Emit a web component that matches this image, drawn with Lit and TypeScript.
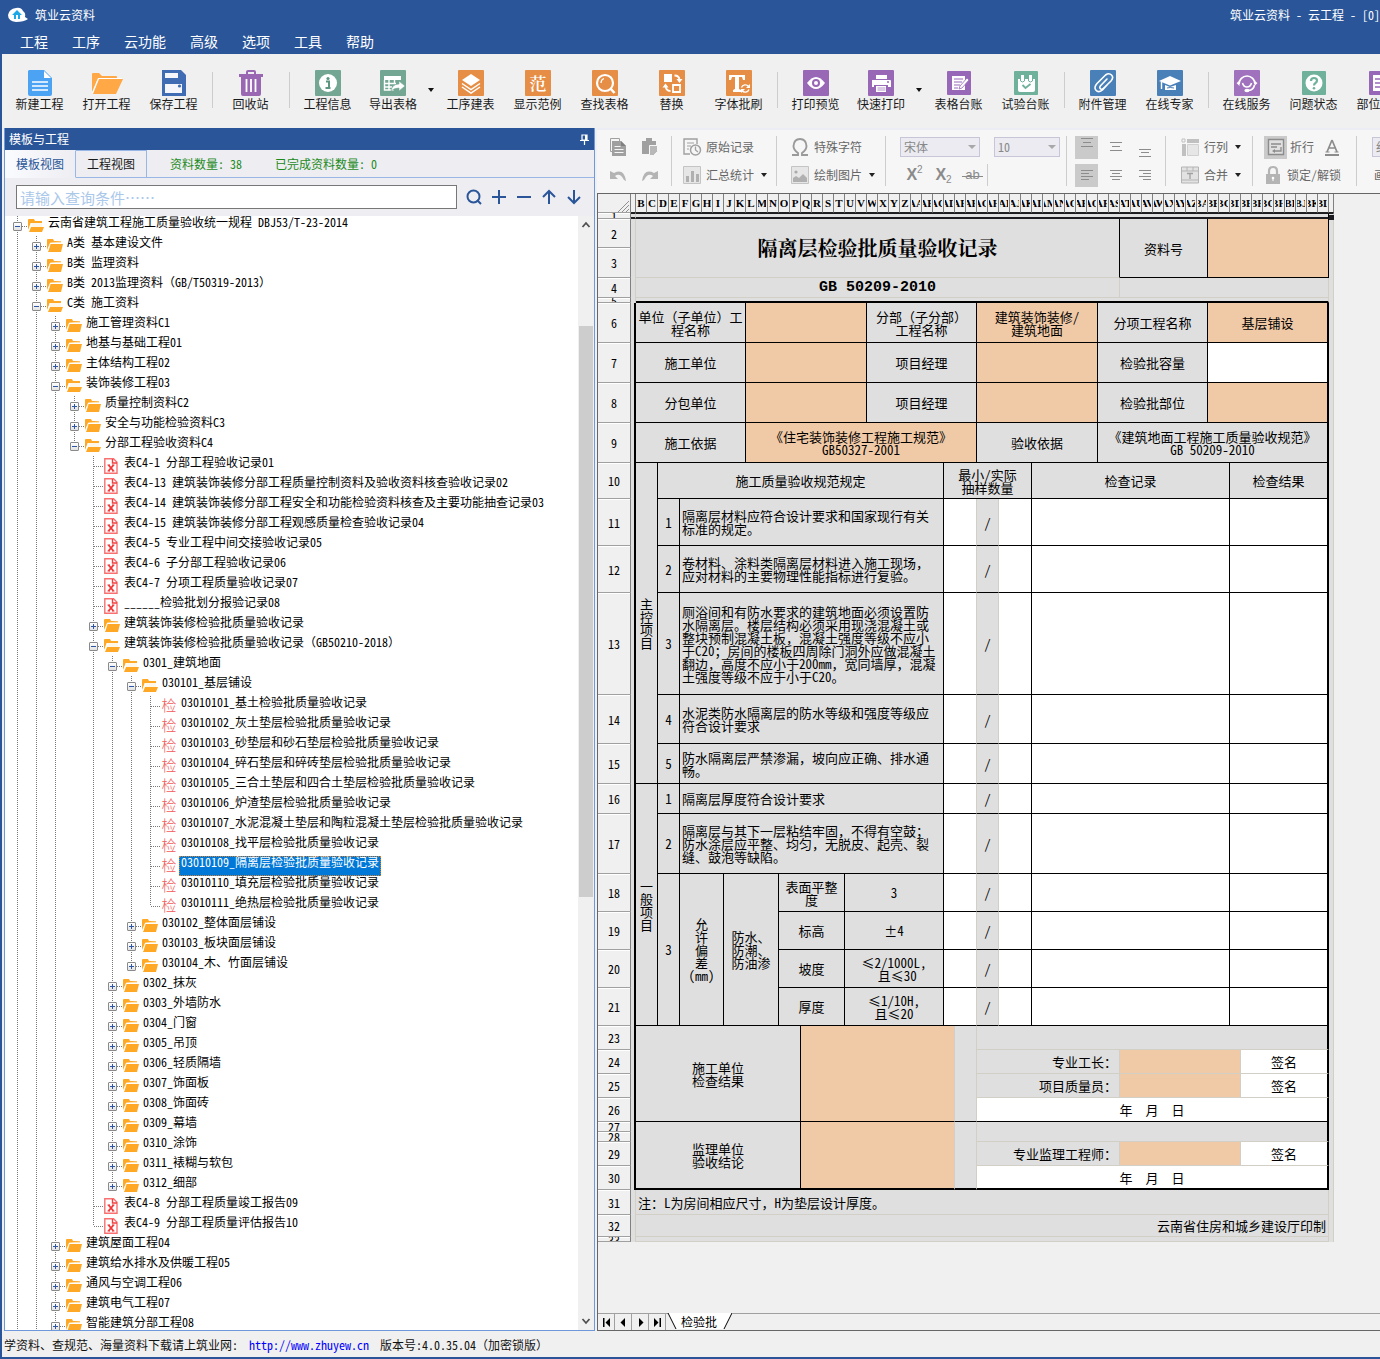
import { LitElement, html, css, svg, nothing } from "lit";
import { customElement, property } from "lit/decorators.js";
import { classMap } from "lit/directives/class-map.js";

const FONT = css`"Noto Sans Mono CJK SC", "Liberation Serif", "Noto Sans CJK SC", sans-serif`;

/* ---------- main toolbar icons, 26 x 26 ---------- */
const tile = (color: string, body: unknown) => svg`<rect width="26" height="26" rx="1" fill=${color}/>${body}`;
const smallTile = (color: string, body: unknown) => svg`<rect x="1" y="1" width="24" height="24" rx="1" fill=${color}/>${body}`;

const icons: Record<string, unknown> = {
  create: svg`<path d="M2 0h15l8 8v16a2 2 0 0 1-2 2H3a2 2 0 0 1-2-2V1z" fill="#4da3f3"/><path d="M17 1v7h7z" fill="#fff"/><path d="M5 12h16M5 16h16M5 20h16" stroke="#fff" stroke-width="1.6"/>`,
  open: svg`<path d="M-2 22V4q0-1 1-1h6l3 3h14q1 0 1 1v1H4z" fill="#ffa845"/><path d="M5 9h24l-7 15H-1z" fill="#ffa845"/><path d="M-1.500 23L4.500 8.500H28" stroke="#fff" stroke-width="1" fill="none"/>`,
  save: svg`<path d="M1 0h19l5 5v21H1z" fill="#3f6cb3"/><path d="M4 3h13v5H4zM4 14h17v9H4z" fill="#f4f6fb"/><circle cx="18.500" cy="16" r="1.600" fill="#3f6cb3"/>`,
  trash: svg`<path d="M9 5V2q0-1 1-1h6q1 0 1 1v3" fill="none" stroke="#9a68b2" stroke-width="2"/><path d="M1 4h24v3H1zM3 7h20v17q0 2-2 2H5q-2 0-2-2z" fill="#9a68b2"/><path d="M8.500 9v13M13 9v13M17.500 9v13" stroke="#fff" stroke-width="1.800"/>`,
  info: tile("#74a793", svg`<circle cx="13" cy="13" r="9" fill="#fff"/><circle cx="13" cy="8.500" r="1.600" fill="#5c9680"/><path d="M11 11.500h3v6M10.500 18h5" stroke="#5c9680" stroke-width="2" fill="none"/>`),
  exportTable: tile("#74a793", svg`<path d="M4 6h17v4H4z" fill="#fff"/><path d="M4.500 10v10h9M4 13.500h12M4 17h8M9 10v10M14.500 10v4" stroke="#fff" stroke-width="1.400" fill="none"/><path d="M11 21q1-7 8-7v-3l6 5-6 5v-3q-5 0-8 3z" fill="#fff" stroke="#74a793" stroke-width=".6"/>`),
  layers: tile("#e68e45", svg`<path d="M13 4l9 6-9 6-9-6z" fill="#fff"/><path d="M4 13.500l9 6 9-6M4 17l9 6 9-6" stroke="#fff" stroke-width="1.500" fill="none"/>`),
  sample: tile("#e68e45", svg`<text x="13" y="19.500" text-anchor="middle" font-size="17" fill="#fff" class="glyph">范</text>`),
  find: tile("#e68e45", svg`<circle cx="13" cy="13" r="8" stroke="#fff" stroke-width="2.200" fill="none"/><path d="M18.500 18.500l4 4.500" stroke="#fff" stroke-width="2.600"/><path d="M9 13q0-3.500 3-4.500" stroke="#fff" fill="none" stroke-width="1.200"/>`),
  swap: tile("#e68e45", svg`<path d="M5 4h8v8H5z" fill="#fff"/><path d="M14 15h7v7h-7z" fill="none" stroke="#fff" stroke-width="1.800"/><path d="M15.500 5.500q5 0 5 5M6.500 15q0 6 5 6" stroke="#fff" stroke-width="1.800" fill="none"/><path d="M17.500 9h6l-3 4zM3.500 17.500l3-4 3 4z" fill="#fff"/>`),
  fontBrush: tile("#e68e45", svg`<path d="M3 5h16v5h-2l-1-3h-3v12l2 1v2H7v-2l2-1V7H6l-1 3H3z" fill="#fff"/><path d="M15.500 17.500a4 4 0 0 1 7-1M23 19.500a4 4 0 0 1-7 1" stroke="#fff" stroke-width="1.400" fill="none"/><path d="M24 14v4h-4zM15 23v-4h4z" fill="#fff"/>`),
  preview: tile("#9867b5", svg`<path d="M4 13q9-12 18 0-9 12-18 0z" fill="#fff"/><circle cx="13" cy="13" r="4" fill="#9867b5"/><circle cx="13" cy="13" r="2" fill="#fff"/>`),
  print: tile("#9867b5", svg`<path d="M8 5h11v4H8z" fill="#fff"/><path d="M4 10h18q1 0 1 1v6h-3v-2H6v2H4z" fill="#fff"/><path d="M8 16h10v6H8z" fill="#fff"/><path d="M9.500 18h8M9.500 20h8" stroke="#b796cc" stroke-width="1"/><circle cx="20" cy="12" r="1" fill="#9867b5"/>`),
  ledger: smallTile("#9868b8", svg`<path d="M6 6h13v14H6z" fill="#fff"/><path d="M8 9h9M8 12h8M8 15h6M8 18h4" stroke="#9868b8" stroke-width="1.200"/><path d="M21 8l2 2-7 8-3 1 1-3z" fill="#fff" stroke="#9868b8" stroke-width=".8"/>`),
  testLedger: smallTile("#6fb19b", svg`<path d="M5 9h17v11q0 2-2 2H7q-2 0-2-2z" fill="#fff"/><path d="M9.500 5v6M17.500 5v6" stroke="#fff" stroke-width="3"/><path d="M7.500 9v2q2 2 4 0V9M15.500 9v2q2 2 4 0V9" stroke="#6fb19b" fill="none"/><path d="M9.500 15l3 3 5-4" stroke="#6fb19b" stroke-width="1.800" fill="none"/>`),
  clip: tile("#4a80b8", svg`<path d="M17 9l-6.500 6.800q-1.500 2 0 3t3-.500L21 11q3-3.500.500-6t-6 0L7 13.500q-3.500 4-1 6.800t6.500-.5l5-5.300" stroke="#fff" stroke-width="1.600" fill="none" stroke-linecap="round"/>`),
  expert: tile("#4a80b8", svg`<path d="M13 6l11 5-11 4.500L2 11z" fill="#fff"/><path d="M8 15v5h11v-5l-6 2z" fill="#fff"/><path d="M10 18q3-1 7 0" stroke="#4a80b8" fill="none"/><path d="M4.500 12v7" stroke="#fff" stroke-width="1.400"/>`),
  service: tile("#a071bd", svg`<path d="M5 14a8 8 0 1 1 16 0" stroke="#fff" stroke-width="1.700" fill="none"/><path d="M2.500 13l3-2v5zM23.500 13l-3-2v5z" fill="#fff"/><path d="M8.500 13q1 4 4.500 4t4.500-4" stroke="#fff" stroke-width="1.600" fill="none"/><path d="M20.500 15q-1 5-6 5.500" stroke="#fff" stroke-width="1.600" fill="none"/><ellipse cx="13" cy="20.500" rx="2.600" ry="1.800" fill="#fff"/>`),
  question: smallTile("#6fb19b", svg`<circle cx="13" cy="13" r="8.500" fill="#fff"/><path d="M10 11q0-3 3-3t3 2.600q0 1.600-1.500 2.400T13 15.500" stroke="#6fb19b" stroke-width="2.200" fill="none"/><circle cx="13" cy="18.200" r="1.300" fill="#6fb19b"/>`),
  part: smallTile("#9868b8", svg`<path d="M5 5h14v16H5z" fill="#fff"/><path d="M7 9h10M7 13h10M7 17h10" stroke="#9868b8" stroke-width="1.600"/>`),
};

type Tool = { icon?: string; label?: string; split?: boolean; sep?: boolean };
const tools: Tool[] = [
  { icon: "create", label: "新建工程" }, { icon: "open", label: "打开工程" }, { icon: "save", label: "保存工程" }, { sep: true },
  { icon: "trash", label: "回收站" }, { sep: true },
  { icon: "info", label: "工程信息" }, { icon: "exportTable", label: "导出表格", split: true },
  { icon: "layers", label: "工序建表" }, { icon: "sample", label: "显示范例" }, { icon: "find", label: "查找表格" },
  { icon: "swap", label: "替换" }, { icon: "fontBrush", label: "字体批刷" }, { sep: true },
  { icon: "preview", label: "打印预览" }, { icon: "print", label: "快速打印", split: true },
  { icon: "ledger", label: "表格台账" }, { icon: "testLedger", label: "试验台账" }, { sep: true },
  { icon: "clip", label: "附件管理" }, { icon: "expert", label: "在线专家" }, { sep: true },
  { icon: "service", label: "在线服务" }, { icon: "question", label: "问题状态" }, { icon: "part", label: "部位管理" },
];

/* ---------- tree ---------- */
type Kind = "+" | "-" | "x" | "j";
type Node = [level: number, kind: Kind, text: string];
const nodes: Node[] = [
  [0, "-", "云南省建筑工程施工质量验收统一规程 DBJ53/T-23-2014"],
  [1, "+", "A类 基本建设文件"],
  [1, "+", "B类 监理资料"],
  [1, "+", "B类 2013监理资料（GB/T50319-2013）"],
  [1, "-", "C类 施工资料"],
  [2, "+", "施工管理资料C1"],
  [2, "+", "地基与基础工程01"],
  [2, "+", "主体结构工程02"],
  [2, "-", "装饰装修工程03"],
  [3, "+", "质量控制资料C2"],
  [3, "+", "安全与功能检验资料C3"],
  [3, "-", "分部工程验收资料C4"],
  [4, "x", "表C4-1 分部工程验收记录01"],
  [4, "x", "表C4-13 建筑装饰装修分部工程质量控制资料及验收资料核查验收记录02"],
  [4, "x", "表C4-14 建筑装饰装修分部工程安全和功能检验资料核查及主要功能抽查记录03"],
  [4, "x", "表C4-15 建筑装饰装修分部工程观感质量检查验收记录04"],
  [4, "x", "表C4-5 专业工程中间交接验收记录05"],
  [4, "x", "表C4-6 子分部工程验收记录06"],
  [4, "x", "表C4-7 分项工程质量验收记录07"],
  [4, "x", "______检验批划分报验记录08"],
  [4, "+", "建筑装饰装修检验批质量验收记录"],
  [4, "-", "建筑装饰装修检验批质量验收记录（GB50210-2018）"],
  [5, "-", "0301_建筑地面"],
  [6, "-", "030101_基层铺设"],
  [7, "j", "03010101_基土检验批质量验收记录"],
  [7, "j", "03010102_灰土垫层检验批质量验收记录"],
  [7, "j", "03010103_砂垫层和砂石垫层检验批质量验收记录"],
  [7, "j", "03010104_碎石垫层和碎砖垫层检验批质量验收记录"],
  [7, "j", "03010105_三合土垫层和四合土垫层检验批质量验收记录"],
  [7, "j", "03010106_炉渣垫层检验批质量验收记录"],
  [7, "j", "03010107_水泥混凝土垫层和陶粒混凝土垫层检验批质量验收记录"],
  [7, "j", "03010108_找平层检验批质量验收记录"],
  [7, "j", "03010109_隔离层检验批质量验收记录"],
  [7, "j", "03010110_填充层检验批质量验收记录"],
  [7, "j", "03010111_绝热层检验批质量验收记录"],
  [6, "+", "030102_整体面层铺设"],
  [6, "+", "030103_板块面层铺设"],
  [6, "+", "030104_木、竹面层铺设"],
  [5, "+", "0302_抹灰"],
  [5, "+", "0303_外墙防水"],
  [5, "+", "0304_门窗"],
  [5, "+", "0305_吊顶"],
  [5, "+", "0306_轻质隔墙"],
  [5, "+", "0307_饰面板"],
  [5, "+", "0308_饰面砖"],
  [5, "+", "0309_幕墙"],
  [5, "+", "0310_涂饰"],
  [5, "+", "0311_裱糊与软包"],
  [5, "+", "0312_细部"],
  [4, "x", "表C4-8 分部工程质量竣工报告09"],
  [4, "x", "表C4-9 分部工程质量评估报告10"],
  [2, "+", "建筑屋面工程04"],
  [2, "+", "建筑给水排水及供暖工程05"],
  [2, "+", "通风与空调工程06"],
  [2, "+", "建筑电气工程07"],
  [2, "+", "智能建筑分部工程08"],
];
const SELECTED = 32;

/* true when a later sibling exists at this level, so its guide line goes on below the row */
function continues(index: number, level: number): boolean {
  for (let i = index + 1; i < nodes.length; i++) {
    if (nodes[i][0] < level) return false;
    if (nodes[i][0] === level) return true;
  }
  return level <= 2;
}

const nodeIcons: Record<Kind, unknown> = {
  "+": svg`<path d="M0 14V4q0-1 1-1h5l1 2h7v2H3z" fill="#ffa826"/><path d="M3.500 7H14V5.500L3 6.500z" fill="#ffe3b0"/><path d="M3 8h13l-2 8H1z" fill="#ffa826"/><path d="M1 15L3.200 8" stroke="#fff" stroke-width=".8"/>`,
  "-": svg`<path d="M0 14V4q0-1 1-1h5l1 2h7v2H3z" fill="#ffa826"/><path d="M4 7h10v4H3z" fill="#fff7e8"/><path d="M3 11h13l-2 5H1z" fill="#ffa826"/><path d="M1 14L3 7" stroke="#fff" stroke-width=".8"/>`,
  x: svg`<path d="M.8 2.800h8.700l3.500 3.500v11H.8z" fill="#fff" stroke="#f87070" stroke-width="1.400"/><path d="M8.500 3v4H13" fill="none" stroke="#f04040" stroke-width="1.400"/><path d="M4.500 9l5 6M9.500 9l-5 6" stroke="#f03838" stroke-width="1.900"/><path d="M3.500 9h2.500M8 9h2.500M3.500 15h2.500M8 15h2.500" stroke="#f03838"/>`,
  j: svg`<text x="8" y="15" text-anchor="middle" font-size="15" fill="#f25a5a" class="glyph">检</text>`,
};

@customElement("template-tree")
class TemplateTree extends LitElement {
  static styles = css`
    :host { display: flex; flex: 1; min-height: 0; background: #fff; font: 12px/12px ${FONT}; color: #000; }
    .list { flex: 1; min-width: 0; margin: 0; padding: 0 0 0 3px; list-style: none; overflow: hidden; }
    .row { display: flex; height: 20px; white-space: nowrap; }
    .guide { flex: none; width: 19px; background-repeat: no-repeat; background-position: 9px 0, 10px 10px; background-size: 1px 0, 9px 0;
      background-image: repeating-linear-gradient(#777 0 1px, transparent 1px 2px), repeating-linear-gradient(90deg, #777 0 1px, transparent 1px 2px); }
    .full { background-size: 1px 100%, 9px 0; }
    .own { display: flex; align-items: center; justify-content: center; background-size: 1px 10px, 9px 1px; }
    .own.full { background-size: 1px 100%, 9px 1px; }
    .toggle { width: 9px; height: 9px; margin: 1px 0 0; padding: 0; border: 1px solid #8a8a8a; border-radius: 1px; background: linear-gradient(#fff, #e2e2e2); display: flex; }
    .toggle svg { width: 7px; height: 7px; }
    .pic { flex: none; width: 18px; height: 20px; padding-left: 1px; box-sizing: border-box; }
    .pic svg { display: block; width: 17px; height: 20px; overflow: visible; }
    .glyph { font-family: "Noto Sans CJK SC", sans-serif; font-weight: 300; }
    .label { margin-left: 1px; padding: 0 2px 8px; }
    .selected { background: #0078d7; color: #fff; padding-bottom: 7px; outline: 1px dotted #d08030; outline-offset: -1px; }
    .bar { flex: none; width: 16px; background: #f0f0f0; display: flex; flex-direction: column; }
    .bar svg { flex: none; display: block; width: 16px; height: 17px; }
    .before { flex: 93; }
    .thumb { flex: 570; background: #cdcdcd; margin: 0 1px; }
    .after { flex: 416; }
  `;
  render() {
    return html`
      <ul class="list" role="tree" aria-label="模板视图">
        ${nodes.map(([level, kind, text], i) => html`
          <li class="row" role="treeitem" aria-level=${level + 1} aria-selected=${i === SELECTED}>
            ${Array.from({ length: level }, (_, k) => html`<span class="guide ${continues(i, k) ? "full" : ""}"></span>`)}
            <span class="guide own ${continues(i, level) ? "full" : ""}">
              ${kind === "+" || kind === "-" ? html`<button class="toggle" aria-label=${kind === "+" ? "展开" : "折叠"}>
                <svg viewBox="0 0 7 7"><path d=${kind === "+" ? "M1 3.500h5M3.500 1v5" : "M1 3.500h5"} stroke="#2f55a5"/></svg></button>` : nothing}
            </span>
            <span class="pic"><svg viewBox="0 0 17 20">${nodeIcons[kind]}</svg></span>
            <span class="label ${i === SELECTED ? "selected" : ""}">${text}</span>
          </li>`)}
      </ul>
      <div class="bar">
        <svg viewBox="0 0 16 17"><path d="M4.500 11L8 7l3.500 4" stroke="#505050" stroke-width="1.800" fill="none"/></svg>
        <div class="before"></div><div class="thumb"></div><div class="after"></div>
        <svg viewBox="0 0 16 17"><path d="M4.500 6L8 10l3.500-4" stroke="#505050" stroke-width="1.800" fill="none"/></svg>
      </div>`;
  }
}

/* ---------- spreadsheet ---------- */
type Cell = { t?: string; w: number; h?: number; c?: string };
type Row = { n: number; h: number; cells: Cell[] };
const c = (w: number, t = "", cls = "", h = 1): Cell => ({ w, t, c: cls, h });
const tally = (): Cell[] => [c(3, "", "w soft"), c(2, "/", "soft"), c(3, "", "w"), c(18, "", "w"), c(9, "", "w")];
const rule = (n: number, h: number, no: string, text: string, lead: Cell[] = []): Row =>
  ({ n, h, cells: [...lead, c(2, no), c(24, text, "left"), ...tally()] });
const limit = (n: number, item: string, value: string, lead: Cell[] = []): Row =>
  ({ n, h: 38, cells: [...lead, c(6, item), c(9, value), ...tally()] });
const sign = (n: number, who: string): Row =>
  ({ n, h: 24, cells: [c(13, who, "right soft faint"), c(11, "", "o soft faint"), c(8, "签名", "w faint")] });

const rows: Row[] = [
  { n: 1, h: 6, cells: [c(63, "", "active")] },
  { n: 2, h: 29, cells: [c(44, "隔离层检验批质量验收记录", "title faint", 2), c(8, "资料号", "", 2), c(11, "", "o", 2)] },
  { n: 3, h: 30, cells: [] },
  { n: 4, h: 20, cells: [c(44, "GB 50209-2010", "code soft faint"), c(19, "", "soft faint")] },
  { n: 5, h: 5, cells: [c(63, "", "soft top")] },
  { n: 6, h: 40, cells: [c(10, "单位（子单位）工\n程名称"), c(11, "", "o"), c(10, "分部（子分部）\n工程名称"), c(11, "建筑装饰装修/\n建筑地面", "o"), c(10, "分项工程名称"), c(11, "基层铺设", "o")] },
  { n: 7, h: 40, cells: [c(10, "施工单位"), c(11, "", "o"), c(10, "项目经理"), c(11, "", "o"), c(10, "检验批容量"), c(11, "", "w")] },
  { n: 8, h: 40, cells: [c(10, "分包单位"), c(11, "", "o"), c(10, "项目经理"), c(11, "", "o"), c(10, "检验批部位"), c(11, "", "o")] },
  { n: 9, h: 40, cells: [c(10, "施工依据"), c(21, "《住宅装饰装修工程施工规范》\nGB50327-2001", "o"), c(11, "验收依据"), c(21, "《建筑地面工程施工质量验收规范》\nGB 50209-2010")] },
  { n: 10, h: 36, cells: [c(2, "主\n控\n项\n目", "", 6), c(26, "施工质量验收规范规定"), c(8, "最小/实际\n抽样数量"), c(18, "检查记录"), c(9, "检查结果")] },
  rule(11, 47, "1", "隔离层材料应符合设计要求和国家现行有关\n标准的规定。"),
  rule(12, 47, "2", "卷材料、涂料类隔离层材料进入施工现场，\n应对材料的主要物理性能指标进行复验。"),
  rule(13, 102, "3", "厕浴间和有防水要求的建筑地面必须设置防\n水隔离层。楼层结构必须采用现浇混凝土或\n整块预制混凝土板，混凝土强度等级不应小\n于C20；房间的楼板四周除门洞外应做混凝土\n翻边，高度不应小于200mm，宽同墙厚，混凝\n土强度等级不应于小于C20。"),
  rule(14, 49, "4", "水泥类防水隔离层的防水等级和强度等级应\n符合设计要求"),
  rule(15, 40, "5", "防水隔离层严禁渗漏，坡向应正确、排水通\n畅。"),
  rule(16, 30, "1", "隔离层厚度符合设计要求", [c(2, "一\n般\n项\n目", "", 6)]),
  rule(17, 60, "2", "隔离层与其下一层粘结牢固，不得有空鼓；\n防水涂层应平整、均匀，无脱皮、起壳、裂\n缝、鼓泡等缺陷。"),
  limit(18, "表面平整\n度", "3", [c(2, "3", "", 4), c(4, "允\n许\n偏\n差\n(mm)", "", 4), c(5, "防水、\n防潮、\n防油渗", "", 4)]),
  limit(19, "标高", "±4"),
  limit(20, "坡度", "≤2/1000L,\n 且≤30"),
  limit(21, "厚度", "≤1/10H,\n且≤20"),
  { n: 23, h: 24, cells: [c(15, "施工单位\n检查结果", "", 4), c(14, "", "o soft", 4), c(2, "", "soft", 4), c(32, "", "faint")] },
  sign(24, "专业工长："),
  sign(25, "项目质量员："),
  { n: 26, h: 24, cells: [c(32, "年　月　日", "w")] },
  { n: 27, h: 10, cells: [c(15, "监理单位\n验收结论", "", 4), c(14, "", "o soft", 4), c(2, "", "soft", 4), c(32, "", "faint", 2)] },
  { n: 28, h: 10, cells: [] },
  sign(29, "专业监理工程师："),
  { n: 30, h: 24, cells: [c(32, "年　月　日", "w")] },
  { n: 31, h: 25, cells: [c(63, "注：L为房间相应尺寸，H为垫层设计厚度。", "left soft faint")] },
  { n: 32, h: 22, cells: [c(63, "云南省住房和城乡建设厅印制", "right soft faint")] },
  { n: 33, h: 5, cells: [c(63, "", "soft faint")] },
];

function columnName(n: number): string {
  let s = "";
  for (n++; n > 0; n = Math.floor((n - 1) / 26)) s = String.fromCharCode(65 + ((n - 1) % 26)) + s;
  return s;
}

@customElement("record-sheet")
class RecordSheet extends LitElement {
  static styles = css`
    :host { display: block; flex: 1; min-height: 0; overflow: hidden; background: #f0f0f0; }
    .grid { border-collapse: separate; border-spacing: 0; table-layout: fixed; width: 736px; font: 13px/13px ${FONT}; text-spacing-trim: space-all; color: #000; }
    .c-head { width: 33px; }
    .c-edge { width: 5px; }
    .c-cell { width: 11px; }
    th, td { padding: 0; box-sizing: border-box; overflow: hidden; font-weight: normal; text-align: center; vertical-align: middle; white-space: pre; }
    .col { height: 19px; border-right: 1px solid #808080; border-bottom: 1px solid #202020; background: #f0f0f0; font: bold 11px/18px "Liberation Serif", serif; }
    .col div { display: flex; justify-content: center; overflow: hidden; height: 18px; margin: 0 1px; }
    .corner { border-right: 1px solid #808080; border-bottom: 1px solid #a0a0a0; background: #f0f0f0; vertical-align: bottom; }
    .corner svg { display: block; width: 12px; height: 12px; margin-left: auto; }
    .head { background: #f0f0f0; border-right: 1px solid #808080; border-bottom: 1px solid #a0a0a0; box-shadow: inset 0 1px #fff; font-size: 12px; }
    .head div { display: flex; align-items: center; justify-content: center; overflow: hidden; }
    .cell { background: #dfdfdf; border-right: 1px solid #000; border-bottom: 1px solid #000; }
    .soft { border-right-color: #d2cfc6; }
    .faint { border-bottom-color: #d2cfc6; }
    .w { background: #fff; }
    .o { background: #f0c9a6; }
    .left { text-align: left; padding-left: 2px; }
    .right { text-align: right; padding-right: 2px; }
    .title { font: bold 20px/24px "Noto Serif CJK SC", "Noto Sans CJK SC", sans-serif; }
    .code { font: bold 15px/18px "Liberation Mono", monospace; }
    .top { border-bottom: 2px solid #000; }
    .frame { border-right: 2px solid #000; }
    .base { border-bottom: 2px solid #000; }
    .side { background: #dfdfdf; border-right: 1px solid #d2cfc6; }
    .side.frame { border-right: 2px solid #000; }
    .active { border-top: 1px solid #1c1c20; border-bottom: 2px solid #1c1c20; }
    .active-end { border-top: 1px solid #1c1c20; border-bottom: 2px solid #1c1c20; position: relative; overflow: visible; }
    .handle { position: absolute; right: -1px; bottom: -3px; width: 5px; height: 5px; background: #1c1c20; }
  `;
  render() {
    const last = rows.findIndex((r) => r.n === 30);
    return html`<table class="grid">
      <colgroup>
        <col class="c-head"><col class="c-edge">
        ${Array.from({ length: 63 }, () => html`<col class="c-cell">`)}
        <col class="c-edge">
      </colgroup>
      <tr>
        <th class="corner"><svg viewBox="0 0 12 12"><path d="M0 12L11 1M4 12l7-7M8 12l3-3" stroke="#909090"/></svg></th>
        <th class="col"></th>
        ${Array.from({ length: 63 }, (_, i) => html`<th class="col" scope="col"><div>${columnName(i + 1)}</div></th>`)}
        <th class="col"></th>
      </tr>
      ${rows.map((r, i) => {
        const framed = r.n >= 6 && r.n <= 30;
        return html`<tr style="height:${r.h}px">
          <th class="head" scope="row"><div style="height:${r.h - 1}px">${r.n}</div></th>
          <td class=${classMap({ side: true, frame: framed, active: r.n === 1 })}></td>
          ${r.cells.map((cell, k) => html`<td
            class="cell ${cell.c} ${framed && k === r.cells.length - 1 ? "frame" : ""} ${i + (cell.h ?? 1) - 1 === last ? "base" : ""}"
            colspan=${cell.w} rowspan=${cell.h ?? 1}>${cell.t}</td>`)}
          <td class="side ${r.n === 1 ? "active-end" : ""}">${r.n === 1 ? html`<span class="handle"></span>` : nothing}</td>
        </tr>`;
      })}
    </table>`;
  }
}

/* ---------- editor ribbon icons, 18 x 18 ---------- */
const G = "#a0a0a0";
const small: Record<string, unknown> = {
  copy: svg`<path d="M1.500.500h9v13h-9z" fill="none" stroke=${G}/><path d="M3 3h9l5 5v10H3z" fill=${G}/><path d="M12 3v5h5z" fill="#808080"/><path d="M5.500 8.500h6M5.500 11.500h9M5.500 14.500h9" stroke="#f6f6f6"/>`,
  paste: svg`<path d="M1 3h4V0h6v3h4v5H8v8H1z" fill=${G}/><path d="M8.500 7.500h8v6l-4 4h-4z" fill="#b8b8b8" stroke="#f6f6f6"/>`,
  undo: svg`<path d="M1 5v8h8L6 10q5-4 9 4l2 1Q15 2 5 7z" fill="#b4b4b4"/>`,
  redo: svg`<path d="M17 5v8H9l3-3Q7 6 3 14l-2 1Q3 2 13 7z" fill="#b4b4b4"/>`,
  record: svg`<path d="M14 6V1H1v15h6" fill="none" stroke=${G} stroke-width="1.400"/><path d="M4 5h7M4 8h4M4 11h2" stroke=${G}/><circle cx="12.500" cy="12" r="5" fill="#f6f6f6" stroke=${G} stroke-width="1.500"/><path d="M12.500 8.500V12l2.500 2" stroke=${G} fill="none" stroke-width="1.300"/>`,
  stats: svg`<path d="M.5.500h17v17H.5z" fill="#e6e6e6" stroke="#c4c4c4"/><path d="M3 10h3v6H3zM8 5h3v11H8zM13 8h3v8h-3z" fill="#b0b0b0"/>`,
  omega: svg`<path d="M1 17h6v-2Q2.500 12 2.500 8 3 1 9 1t6.500 7q0 4-4.500 7v2h6" stroke="#9a9a9a" stroke-width="1.900" fill="none"/>`,
  image: svg`<path d="M.5.500h17v17H.5z" fill="#e6e6e6" stroke="#c4c4c4"/><circle cx="5" cy="6" r="1.600" fill="#aaa"/><path d="M2 16v-4l3-2 3 2 4-4 4 4v4z" fill="#b0b0b0"/>`,
  rows: svg`<path d="M6 1h12v4H6zM1 6h4v12H1z" fill="#c0c0c0"/><path d="M6.500 6.500h11v11h-11z" fill="#e6e6e6" stroke="#d0d0d0"/><path d="M1 1h3v3H1z" fill="none" stroke="#c0c0c0"/>`,
  merge: svg`<path d="M.5 1h17v16H.5z" fill="#e2e2e2" stroke="#b4b4b4"/><path d="M.5 5h17M.5 14h17M6 1v4M12 1v4" stroke="#b4b4b4"/><path d="M6 7.500h6M9 7.500V13" stroke="#a0a0a0" stroke-width="1.300"/>`,
  wrap: svg`<path d="M1.500 1.500h15v15h-15z" fill="#e0e0e0" stroke="#8c8c8c" stroke-width="1.400"/><path d="M4 6h10M4 9h6M14 9v4H8" stroke="#8c8c8c" stroke-width="1.300" fill="none"/><path d="M5 13l3-2v4z" fill="#8c8c8c"/>`,
  color: svg`<path d="M9 2l5 12M9 2L4 14M6 10h7" stroke="#8c8c8c" stroke-width="1.700" fill="none"/><path d="M2.500 14h4M11.500 14h4" stroke="#8c8c8c"/><path d="M2 17h14" stroke="#8c8c8c" stroke-width="2"/>`,
  lock: svg`<path d="M5 8V5q0-4 4-4t4 4v3" stroke="#b4b4b4" stroke-width="2.200" fill="none"/><path d="M2 8h14v10H2z" fill="#b4b4b4"/><circle cx="9" cy="12" r="1.300" fill="#fff"/><path d="M9 12v3" stroke="#fff"/>`,
  top: svg`<path d="M3 .5h12M5 4.500h8M3 8.500h12" stroke="#8c8c8c"/>`,
  middle: svg`<path d="M3 4.500h12M5 8.500h8M3 12.500h12" stroke="#8c8c8c"/>`,
  bottom: svg`<path d="M3 11.500h12M5 14.500h8M3 18.500h12" stroke="#8c8c8c"/>`,
  alignLeft: svg`<path d="M3 4.500h12M3 7.500h8M3 10.500h12M3 13.500h8" stroke="#8c8c8c"/>`,
  alignCenter: svg`<path d="M3 4.500h12M5 7.500h8M3 10.500h12M5 13.500h8" stroke="#8c8c8c"/>`,
  alignRight: svg`<path d="M3 4.500h12M7 7.500h8M3 10.500h12M7 13.500h8" stroke="#8c8c8c"/>`,
};

@customElement("editor-ribbon")
class EditorRibbon extends LitElement {
  static styles = css`
    :host { display: flex; flex: none; height: 60px; padding: 3px 0 0 1px; border-top: 2px solid #ececf4; background: #f6f6f6; overflow: hidden; font: 12px/16px ${FONT}; color: #666; }
    .group { flex: none; box-sizing: border-box; display: flex; flex-direction: column; height: 56px; padding-left: 12px; }
    .line { display: flex; align-items: center; height: 28px; }
    .rule { flex: none; width: 1px; height: 50px; margin-top: 3px; background: #cdcdcd; }
    .edit { width: 73px; padding-left: 4px; }
    .records { width: 104px; padding-left: 9px; }
    .symbols { width: 108px; padding-left: 12px; }
    .fonts { width: 180px; padding-left: 14px; }
    .aligns { width: 98px; padding-left: 5px; }
    .lines { width: 86px; padding-left: 13px; }
    .wraps { width: 103px; padding-left: 9px; }
    .more { padding-left: 15px; }
    .btn { display: flex; align-items: center; gap: 5px; padding: 0 2px; border: 0; background: none; color: inherit; font: inherit; white-space: nowrap; }
    .btn svg { flex: none; width: 18px; height: 18px; overflow: visible; }
    .sq { width: 32px; justify-content: center; }
    .al { width: 29px; justify-content: center; padding: 0; }
    .al span { display: grid; place-items: center; width: 23px; height: 23px; }
    .btn .on { background: #cacaca; display: grid; place-items: center; width: 23px; height: 23px; margin-right: -2px; }
    .al .on { margin-right: 0; }
    .caret { border: 3px solid transparent; border-top: 4px solid #222; border-bottom: 0; margin-left: 2px; }
    .pick { position: relative; margin-right: 14px; }
    .pick select { appearance: none; display: block; height: 20px; width: 80px; padding: 0 3px; border: 1px solid #c6c6d8; border-radius: 0; background: #ebebf1; color: #888; font: inherit; }
    .pick .size { width: 66px; }
    .pick::after { content: ""; position: absolute; right: 4px; top: 8px; border: 4px solid transparent; border-top: 4px solid #a8a8a8; border-bottom: 0; pointer-events: none; }
    .fx { width: 29px; padding: 0; justify-content: center; gap: 0; font: bold 16px/20px "Liberation Sans", sans-serif; color: #8a8a8a; }
    .fx sup, .fx sub { font-size: 10px; line-height: 10px; font-weight: normal; }
    .fx sup { align-self: flex-start; }
    .fx sub { align-self: flex-end; }
    .fx s { padding: 0 3px; font-size: 13px; font-weight: normal; line-height: 20px; text-decoration: none; background: linear-gradient(#8a8a8a, #8a8a8a) 0 11px / 100% 1px no-repeat; }
    .tick { width: 1px; height: 22px; background: #cdcdcd; }
  `;
  private btn(icon: string, label: string, caret = false) {
    return html`<button class="btn"><svg viewBox="0 0 18 18">${small[icon]}</svg>${label}${caret ? html`<span class="caret"></span>` : nothing}</button>`;
  }
  private sq(icon: string, label: string) {
    return html`<button class="btn sq" aria-label=${label}><svg viewBox="0 0 18 18">${small[icon]}</svg></button>`;
  }
  private al(icon: string, label: string, on = false) {
    return html`<button class="btn al" aria-label=${label}><span class=${on ? "on" : ""}><svg viewBox="0 0 18 18">${small[icon]}</svg></span></button>`;
  }
  render() {
    return html`
      <div class="group edit">
        <div class="line">${this.sq("copy", "复制")}${this.sq("paste", "粘贴")}</div>
        <div class="line">${this.sq("undo", "撤销")}${this.sq("redo", "重做")}</div>
      </div><span class="rule"></span>
      <div class="group records">
        <div class="line">${this.btn("record", "原始记录")}</div>
        <div class="line">${this.btn("stats", "汇总统计", true)}</div>
      </div><span class="rule"></span>
      <div class="group symbols">
        <div class="line">${this.btn("omega", "特殊字符")}</div>
        <div class="line">${this.btn("image", "绘制图片", true)}</div>
      </div><span class="rule"></span>
      <div class="group fonts">
        <div class="line">
          <span class="pick"><select aria-label="字体"><option>宋体</option></select></span>
          <span class="pick"><select class="size" aria-label="字号"><option>10</option></select></span>
        </div>
        <div class="line">
          <button class="btn fx">X<sup>2</sup></button><button class="btn fx">X<sub>2</sub></button><button class="btn fx"><s>ab</s></button><span class="tick"></span>
        </div>
      </div><span class="rule"></span>
      <div class="group aligns">
        <div class="line">${this.al("top", "顶端对齐", true)}${this.al("middle", "垂直居中")}${this.al("bottom", "底端对齐")}</div>
        <div class="line">${this.al("alignLeft", "左对齐", true)}${this.al("alignCenter", "居中")}${this.al("alignRight", "右对齐")}</div>
      </div><span class="rule"></span>
      <div class="group lines">
        <div class="line">${this.btn("rows", "行列", true)}</div>
        <div class="line">${this.btn("merge", "合并", true)}</div>
      </div><span class="rule"></span>
      <div class="group wraps">
        <div class="line">
          <button class="btn"><span class="on"><svg viewBox="0 0 18 18">${small.wrap}</svg></span>折行</button>
          ${this.sq("color", "字体颜色")}
        </div>
        <div class="line">${this.btn("lock", "锁定/解锁")}</div>
      </div><span class="rule"></span>
      <div class="group more">
        <div class="line"><span class="pick"><select aria-label="线型"><option>细实线</option></select></span></div>
        <div class="line"><button class="btn">画线</button></div>
      </div>`;
  }
}

@customElement("app-root")
class AppRoot extends LitElement {
  @property() heading = "筑业云资料";
  static styles = css`
    :host { display: block; font: 12px/16px ${FONT}; color: #1a1a1a; }
    .app { box-sizing: border-box; height: 100vh; display: flex; flex-direction: column; overflow: hidden; background: #f0f0f0; border-left: 2px solid #2a5699; border-bottom: 2px solid #2a5699; }
    .title { display: flex; align-items: center; height: 30px; padding-left: 5px; background: #2a5699; color: #fff; white-space: nowrap; }
    .logo { width: 22px; height: 16px; margin-right: 6px; }
    .doc { margin-left: auto; }
    .menu { display: flex; gap: 24px; height: 24px; padding-left: 18px; background: #2a5699; align-items: flex-start; }
    .menu button { border: 0; padding: 0; background: none; color: #fff; font: 14px/22px ${FONT}; white-space: nowrap; }
    .tools { flex: none; display: flex; height: 57px; padding: 16px 0 0 4px; overflow: hidden; }
    .tool { flex: none; width: 67px; display: flex; flex-direction: column; align-items: center; padding: 0; border: 0; background: none; font: inherit; color: inherit; white-space: nowrap; }
    .tool svg { width: 26px; height: 26px; overflow: visible; }
    .split { width: 64px; }
    .glyph { font-family: "Noto Serif CJK SC", "Noto Sans CJK SC", sans-serif; font-weight: 600; }
    .drop { flex: none; display: grid; place-items: center; width: 12px; height: 40px; padding: 0; border: 0; background: none; }
    .drop span { border: 3px solid transparent; border-top: 4px solid #111; border-bottom: 0; }
    .sep { flex: none; width: 1px; height: 36px; margin: 2px 4px 0 5px; background: #cdcdcd; }
    .main { flex: 1; min-height: 0; display: flex; padding: 1px 0 1px 2px; gap: 2px; }
    .panel { flex: 0 0 591px; box-sizing: border-box; display: flex; flex-direction: column; border: 1px solid #6f98dc; border-top: 0; background: #eeeef2; }
    .caption { display: flex; align-items: center; justify-content: space-between; height: 22px; padding: 0 5px 0 4px; background: #2a5699; color: #fff; }
    .caption svg { width: 9px; height: 11px; }
    .tabs { display: flex; height: 28px; align-items: stretch; }
    .tab { box-sizing: border-box; width: 71px; padding: 0; border: 1px solid #98b6e6; border-left: 0; background: #eeeef2; font: inherit; color: inherit; }
    .current { border-color: transparent #98b6e6 transparent transparent; background: linear-gradient(90deg, #fafbfe, #eeeef2); color: #2a5699; }
    .counts { flex: 1; display: flex; gap: 33px; align-items: center; padding-left: 23px; border-bottom: 1px solid #98b6e6; color: #1c8a1c; }
    .search { display: flex; align-items: center; gap: 9px; height: 38px; padding: 0 12px 0 11px; }
    .search input { flex: 1; min-width: 0; box-sizing: border-box; height: 24px; padding: 0 3px; border: 1px solid #777; outline: 0; font: 15px/20px ${FONT}; }
    .search input::placeholder { color: #aac8ea; opacity: 1; }
    .icon { flex: none; width: 16px; height: 16px; padding: 0; border: 0; background: none; }
    .icon svg { display: block; width: 16px; height: 16px; }
    .editor { flex: 1; min-width: 0; display: flex; flex-direction: column; }
    .book { flex: 1; min-height: 0; display: flex; flex-direction: column; border: 1px solid #666; border-right: 0; }
    .sheets { flex: none; display: flex; height: 16px; border-top: 1px solid #a0a0a0; }
    .sheets .nav { box-sizing: border-box; width: 17px; height: 16px; padding: 0; border: 0; border-right: 1px solid #a0a0a0; background: #f0f0f0; display: grid; place-items: center; }
    .nav svg { width: 9px; height: 9px; }
    .sheet-tab { position: relative; width: 66px; padding: 0; border: 0; background: none; font: inherit; color: #000; }
    .sheet-tab svg { position: absolute; inset: -1px 0 0 0; width: 66px; height: 17px; }
    .sheet-tab span { position: relative; }
    .status { flex: none; display: flex; align-items: center; gap: 11px; height: 25px; padding-left: 2px; color: #111; white-space: nowrap; }
    .status a { color: #00f; text-decoration: none; }
  `;
  private tool(t: Tool) {
    if (t.sep) return html`<span class="sep"></span>`;
    return html`<button class="tool ${t.split ? "split" : ""}"><svg viewBox="0 0 26 26">${icons[t.icon!]}</svg>${t.label}</button>
      ${t.split ? html`<button class="drop" aria-label=${t.label + "选项"}><span></span></button>` : nothing}`;
  }
  render() {
    const act = (label: string, d: unknown) => html`<button class="icon" aria-label=${label}><svg viewBox="0 0 16 16" fill="none" stroke="#2a5699" stroke-width="2">${d}</svg></button>`;
    const nav = (label: string, d: string) => html`<button class="nav" aria-label=${label}><svg viewBox="0 0 9 9"><path d=${d}/></svg></button>`;
    return html`<div class="app">
      <header class="title">
        <svg class="logo" viewBox="0 0 22 16"><path d="M9 1q5-1 7 3 3 2 2 6l3 2q-4 3-12 3Q1 14 1 8 2 2 9 1z" fill="#fff"/><path d="M5 8l5-5 5 5h-2v4H7V8z" fill="#1fa8e8"/><path d="M9 8h2v4H9z" fill="#fff"/></svg>
        ${this.heading}<span class="doc">筑业云资料 - 云工程 - [0]</span>
      </header>
      <nav class="menu">${["工程", "工序", "云功能", "高级", "选项", "工具", "帮助"].map((m) => html`<button>${m}</button>`)}</nav>
      <div class="tools">${tools.map((t) => this.tool(t))}</div>
      <div class="main">
        <section class="panel">
          <div class="caption">模板与工程<svg viewBox="0 0 9 11"><path d="M2 1h5v5H2zM0 6.500h9M4.500 7v4" stroke="#fff" fill="none" stroke-width="1.200"/><path d="M5 1h2v5H5z" fill="#fff"/></svg></div>
          <div class="tabs">
            <button class="tab current">模板视图</button><button class="tab">工程视图</button>
            <div class="counts"><span>资料数量: 38</span><span>已完成资料数量: 0</span></div>
          </div>
          <div class="search">
            <input aria-label="查询条件" placeholder="请输入查询条件……">
            ${act("查询", svg`<circle cx="7.500" cy="7.500" r="6"/><path d="M11 11l4 4"/>`)}
            ${act("添加", svg`<path d="M8 1v14M1 8h14"/>`)}
            ${act("删除", svg`<path d="M1 8h14"/>`)}
            ${act("上移", svg`<path d="M8 15V2M2 8l6-6 6 6"/>`)}
            ${act("下移", svg`<path d="M8 1v13M2 8l6 6 6-6"/>`)}
          </div>
          <template-tree></template-tree>
        </section>
        <section class="editor">
          <editor-ribbon></editor-ribbon>
          <div class="book">
            <record-sheet></record-sheet>
            <div class="sheets">
              ${nav("第一张", "M1 0h1.500v9H1zM8 0v9L3.500 4.500z")}${nav("上一张", "M6 0v9L1.500 4.500z")}${nav("下一张", "M3 0v9l4.500-4.500z")}${nav("最后一张", "M1 0v9l4.500-4.500zM6.500 0H8v9H6.500z")}
              <button class="sheet-tab"><svg viewBox="0 0 66 17"><path d="M2 0l8 16h48l8-16z" fill="#fff"/><path d="M2 0l8 16M58 16l8-16" stroke="#000" fill="none"/></svg><span>检验批</span></button>
            </div>
          </div>
        </section>
      </div>
      <footer class="status"><span>学资料、查规范、海量资料下载请上筑业网:</span><a href="http://www.zhuyew.cn">http://www.zhuyew.cn</a><span>版本号:4.0.35.04（加密锁版）</span></footer>
    </div>`;
  }
}
